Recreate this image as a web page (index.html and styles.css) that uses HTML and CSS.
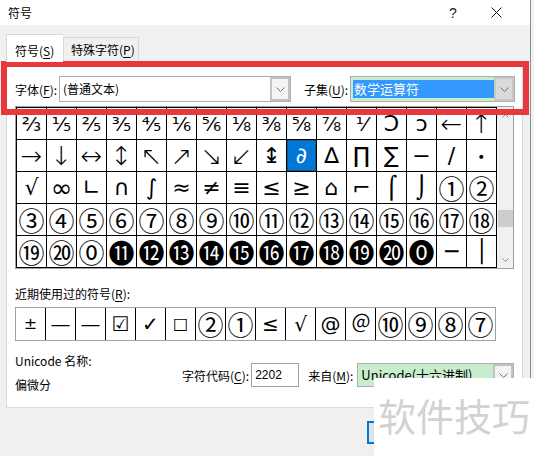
FILE: index.html
```html
<!DOCTYPE html>
<html lang="zh-CN">
<head>
<meta charset="utf-8">
<title>符号</title>
<link rel="stylesheet" href="styles.css">
</head>
<body>
<div class="dialog">
  <div class="titlebar">
    <span class="title">符号</span>
    <span class="help">?</span>
    <span class="close"><svg width="11" height="11" viewBox="0 0 11 11"><path d="M0.5 0.5L10.5 10.5M10.5 0.5L0.5 10.5" stroke="#111" stroke-width="1" fill="none"/></svg></span>
  </div>
  <div class="body">
    <div class="tabs">
      <div class="tab active">符号(<u>S</u>)</div>
      <div class="tab">特殊字符(<u>P</u>)</div>
    </div>
    <div class="panel">
      <div class="fontrow">
        <span class="lbl-font">字体(<u>F</u>):</span>
        <div class="combo font-combo">
          <span class="val">(普通文本)</span>
          <span class="drop"><svg width="9" height="5" viewBox="0 0 9 5"><path d="M0.5 0.5L4.5 4.5L8.5 0.5" stroke="#707070" fill="none"/></svg></span>
        </div>
        <span class="lbl-sub">子集(<u>U</u>):</span>
        <div class="combo sub-combo">
          <span class="hl">数学运算符</span>
          <span class="drop"><svg width="9" height="5" viewBox="0 0 9 5"><path d="M0.5 0.5L4.5 4.5L8.5 0.5" stroke="#707070" fill="none"/></svg></span>
        </div>
      </div>
      <div class="gridframe">
        <div class="grid">
          <span>⅔</span><span>⅕</span><span>⅖</span><span>⅗</span><span>⅘</span><span>⅙</span><span>⅚</span><span>⅛</span><span>⅜</span><span>⅝</span><span>⅞</span><span>⅟</span><span class="m">Ↄ</span><span class="m">ↄ</span><span class="a">←</span><span class="a">↑</span>
          <span class="a">→</span><span class="a">↓</span><span class="a">↔</span><span class="a">↕</span><span class="a">↖</span><span class="a">↗</span><span class="a">↘</span><span class="a">↙</span><span class="m">↨</span><span class="sel">∂</span><span class="m">∆</span><span class="m">∏</span><span class="m">∑</span><span class="m">−</span><span class="m">∕</span><span class="dot">∙</span>
          <span class="m">√</span><span class="inf">∞</span><span class="m">∟</span><span class="m">∩</span><span class="m">∫</span><span class="m">≈</span><span class="m">≠</span><span class="m">≡</span><span class="m">≤</span><span class="m">≥</span><span class="m">⌂</span><span class="m">⌐</span><span class="m">⌠</span><span class="m">⌡</span><span class="c">①</span><span class="c">②</span>
          <span class="c">③</span><span class="c">④</span><span class="c">⑤</span><span class="c">⑥</span><span class="c">⑦</span><span class="c">⑧</span><span class="c">⑨</span><span class="c">⑩</span><span class="c">⑪</span><span class="c">⑫</span><span class="c">⑬</span><span class="c">⑭</span><span class="c">⑮</span><span class="c">⑯</span><span class="c">⑰</span><span class="c">⑱</span>
          <span class="c">⑲</span><span class="c">⑳</span><span class="c">⓪</span><span class="c">⓫</span><span class="c">⓬</span><span class="c">⓭</span><span class="c">⓮</span><span class="c">⓯</span><span class="c">⓰</span><span class="c">⓱</span><span class="c">⓲</span><span class="c">⓳</span><span class="c">⓴</span><span class="c">⓿</span><span class="m">─</span><span class="m">│</span>
        </div>
        <div class="scrollbar">
          <span class="arr"><svg width="7" height="4" viewBox="0 0 7 4"><path d="M0.5 3.5L3.5 0.5L6.5 3.5" stroke="#8a8a8a" fill="none"/></svg></span>
          <span class="thumb"></span>
          <span class="arr down"><svg width="7" height="4" viewBox="0 0 7 4"><path d="M0.5 0.5L3.5 3.5L6.5 0.5" stroke="#8a8a8a" fill="none"/></svg></span>
        </div>
      </div>
      <div class="recent-label">近期使用过的符号(<u>R</u>):</div>
      <div class="recent">
        <span class="sm">±</span><span>—</span><span>—</span><span>☑</span><span>✓</span><span class="sm">□</span><span class="c">②</span><span class="c">①</span><span>≤</span><span>√</span><span>@</span><span>＠</span><span class="c">⑩</span><span class="c">⑨</span><span class="c">⑧</span><span class="c">⑦</span>
      </div>
      <div class="info">
        <div class="names">
          <div>Unicode 名称:</div>
          <div>偏微分</div>
        </div>
        <div class="code">
          <span>字符代码(<u>C</u>):</span>
          <span class="input">2202</span>
          <span class="lbl-from">来自(<u>M</u>):</span>
          <div class="combo from-combo">
            <span class="val">Unicode(十六进制)</span>
            <span class="drop"><svg width="9" height="5" viewBox="0 0 9 5"><path d="M0.5 0.5L4.5 4.5L8.5 0.5" stroke="#707070" fill="none"/></svg></span>
          </div>
        </div>
      </div>
    </div>
    <div class="buttons">
      <span class="btn">插入(<u>I</u>)</span>
    </div>
  </div>
  <div class="redbox"></div>
</div>
<div class="watermark">软件技巧</div>
</body>
</html>
```

FILE: styles.css
```css
* { box-sizing: border-box; margin: 0; padding: 0; }
html, body { width: 534px; height: 456px; overflow: hidden; }
body {
  background: #eef4ee;
  font-family: "Noto Sans CJK SC", "Noto Sans", sans-serif;
  font-size: 12px;
  color: #000;
  display: flex;
}
u { text-decoration: underline; text-underline-offset: 2px; }

.dialog {
  position: relative;
  width: 531px;
  height: 456px;
  background: #f0f0f0;
  border-right: 1px solid #8c8c8c;
  display: flex;
  flex-direction: column;
}

.titlebar {
  height: 25px;
  background: #fff;
  display: flex;
  align-items: center;
  padding-left: 8px;
}
.title { flex: 1; line-height: 16px; }
.help {
  font-family: "Liberation Sans", sans-serif;
  font-size: 14px;
  width: 10px;
  margin-right: 32px;
  color: #222;
}
.close { display: flex; margin-right: 28px; }

.body {
  flex: 1;
  display: flex;
  flex-direction: column;
  padding: 8px 0 0 6px;
}

.tabs { display: flex; align-items: flex-end; height: 28px; }
.tab {
  height: 24px;
  width: 76px;
  padding: 4px 0 0 7px;
  line-height: 16px;
  border: 1px solid #d9d9d9;
  border-bottom: none;
  background: #f0f0f0;
}
.tab.active {
  width: 57px;
  height: 28px;
  padding: 8px 0 0 8px;
  background: #fff;
  margin-bottom: -1px;
  position: relative;
  z-index: 1;
  border-right: none;
}

.panel {
  width: 517px;
  height: 347px;
  background: #fff;
  border: 1px solid #d9d9d9;
  padding-left: 8px;
}

.fontrow {
  display: flex;
  align-items: center;
  height: 26px;
  margin-top: 14px;
}
.lbl-font { width: 44px; }
.combo {
  display: flex;
  align-items: stretch;
  height: 26px;
  border: 1px solid #adadad;
  background: #fff;
}
.combo .val { flex: 1; padding-left: 3px; line-height: 24px; white-space: nowrap; overflow: hidden; }
.combo .drop {
  width: 20px;
  display: flex;
  align-items: center;
  justify-content: center;
  background: #f4f4f4;
  border: 2px solid #c2c2c2;
}
.font-combo { width: 232px; }
.lbl-sub { margin-left: 13px; width: 46px; }
.sub-combo { width: 165px; background: #c7edcc; }
.sub-combo .hl {
  flex: 1;
  margin: 3px 0 3px 2px;
  background: #3399ff;
  color: #fff;
  font-size: 13px;
  line-height: 18px;
  padding-left: 1px;
}
.sub-combo .drop { background: #dadada; border-color: #c8c8c8; }

.gridframe {
  display: flex;
  width: 499px;
  height: 163px;
  margin-top: 4px;
  border: 1px solid #a0a0a0;
}
.grid {
  display: grid;
  grid-template-columns: repeat(16, 29px);
  grid-auto-rows: 31px;
  gap: 1px;
  width: 481px;
  height: 161px;
  background: #000;
  border: 1px solid #000;
}
.grid span, .recent span {
  background: #fff;
  display: flex;
  align-items: center;
  justify-content: center;
  font-family: "DejaVu Sans", sans-serif;
  font-size: 20px;
  line-height: 1;
  overflow: hidden;
}
.grid span.m { font-size: 22px; }
.grid span.a { font-size: 26px; font-weight: 300; }
.grid span.inf { font-size: 26px; }
.grid span.dot { font-size: 14px; }
.grid span.c, .recent span.c {
  font-family: "Noto Sans CJK SC", sans-serif;
  font-size: 26px;
}
.grid span.sel {
  background: #0078d7;
  color: #fff;
  font-size: 22px;
  outline: 1px dotted #333;
  outline-offset: -1px;
}
.scrollbar {
  width: 16px;
  background: #f0f0f0;
  display: flex;
  flex-direction: column;
  align-items: center;
}
.arr { height: 17px; display: flex; align-items: center; justify-content: center; }
.thumb { width: 15px; height: 17px; background: #cdcdcd; margin-top: 86px; }
.arr.down { margin-top: auto; }

.recent-label { margin-top: 17px; line-height: 16px; }
.recent {
  display: grid;
  grid-template-columns: repeat(16, 29px);
  grid-auto-rows: 32px;
  gap: 1px;
  width: 481px;
  height: 34px;
  margin-top: 5px;
  background: #000;
  border: 1px solid #a0a0a0;
}
.recent span.sm { font-size: 16px; }

.info { display: flex; margin-top: 8px; }
.names { width: 167px; line-height: 24px; }
.code { display: flex; align-items: center; height: 24px; margin-top: 14px; }
.input {
  width: 48px;
  height: 24px;
  margin-left: 2px;
  border: 1px solid #a0a0a0;
  padding-left: 3px;
  font-family: "Liberation Sans", sans-serif;
  font-size: 12px;
  line-height: 22px;
}
.lbl-from { margin-left: 9px; }
.from-combo { width: 157px; height: 24px; margin-left: 4px; background: #c7edcc; }
.from-combo .val { line-height: 22px; font-size: 13px; }

.buttons { margin-top: 13px; padding-left: 361px; display: flex; }
.btn {
  width: 75px;
  height: 23px;
  border: 2px solid #0078d7;
  background: #e1e1e1;
  text-align: center;
  line-height: 19px;
}

.redbox {
  position: absolute;
  left: 1px;
  top: 61px;
  width: 528px;
  height: 54px;
  border: 6px solid #e8383d;
}

.watermark {
  position: absolute;
  left: 374px;
  top: 378px;
  width: 160px;
  height: 78px;
  background: #fff;
  color: #d2d2d2;
  font-size: 38px;
  line-height: 38px;
  padding: 18px 0 0 4px;
  white-space: nowrap;
}
```
